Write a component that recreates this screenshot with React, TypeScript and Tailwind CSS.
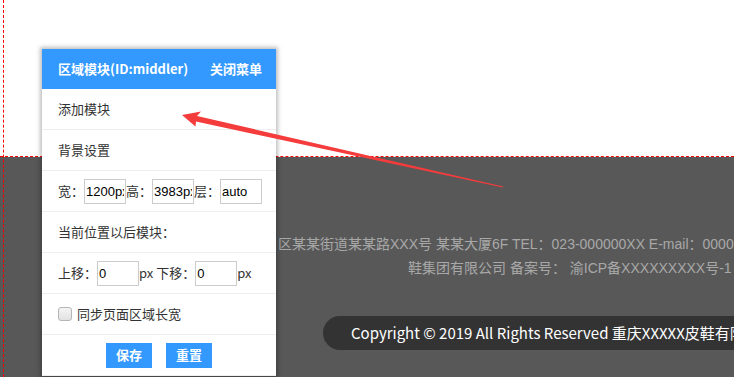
import React from "react";

const cjk = { fontFamily: '"Noto Sans CJK SC", "Noto Sans", sans-serif' };
const mixed = { fontFamily: '"Liberation Sans", "Noto Sans CJK SC", sans-serif' };

function Row({ children, className = "" }: { children: React.ReactNode; className?: string }) {
  return (
    <div className={`h-[41px] border-b border-[#eeeeee] flex items-center pl-[16px] text-[13px] text-[#333] ${className}`}>
      {children}
    </div>
  );
}

function Box({ value, w = "w-[42px]" }: { value: string; w?: string }) {
  return (
    <input
      readOnly
      defaultValue={value}
      className={`${w} h-[25px] border border-[#cccccc] bg-white px-[1px] text-[13px] text-black outline-none`}
      style={mixed}
    />
  );
}

export default function App() {
  return (
    <div className="relative w-[734px] h-[377px] overflow-hidden bg-white" style={cjk}>
      <div className="h-[157px] border-b border-dashed border-[#ff0000] bg-white" />
      <div className="h-[220px] bg-[#585858] pt-[75px]">
        <div className="whitespace-nowrap text-[14px] leading-[24px] text-[#a8a8a8] pl-[278px]" style={mixed}>
          区某某街道某某路XXX号 某某大厦6F TEL：023-000000XX E-mail：0000XXXX@qq.com
        </div>
        <div className="whitespace-nowrap text-[14px] leading-[24px] text-[#a8a8a8] pl-[408px]" style={mixed}>
          鞋集团有限公司 备案号： 渝ICP备XXXXXXXXX号-1
        </div>
        <div className="mt-[36px] ml-[323px] h-[34px] rounded-l-full bg-[#333333] flex items-center pl-[28px] whitespace-nowrap text-[15px] text-white">
          Copyright © 2019 All Rights Reserved 重庆XXXXX皮鞋有限公司
        </div>
      </div>

      {/* vertical dashed guide */}
      <div className="absolute left-[3px] top-0 h-full border-l border-dashed border-[#ff0000]" />

      {/* context panel */}
      <div className="absolute left-[42px] top-[49px] w-[234px] bg-white shadow-[0_0_4px_2px_rgba(0,0,0,0.25)]">
        <div className="h-[40px] bg-[#3399ff] flex items-center justify-between pl-[16px] pr-[14px] text-[13px] font-bold text-white">
          <span>区域模块(ID:middler)</span>
          <span>关闭菜单</span>
        </div>
        <Row>添加模块</Row>
        <Row>背景设置</Row>
        <Row>
          <span>宽：</span>
          <Box value="1200px" />
          <span>高：</span>
          <Box value="3983px" />
          <span>层：</span>
          <Box value="auto" />
        </Row>
        <Row>当前位置以后模块：</Row>
        <Row>
          <span>上移：</span>
          <Box value="0" />
          <span>px 下移：</span>
          <Box value="0" />
          <span>px</span>
        </Row>
        <Row>
          <span className="w-[14px] h-[14px] rounded-[3px] border border-[#b5b5b5] bg-gradient-to-b from-[#f4f4f4] to-[#e2e2e2] mr-[5px]" />
          <span>同步页面区域长宽</span>
        </Row>
        <div className="h-[41px] border-b border-[#eeeeee] flex items-center justify-center gap-[14px]">
          <button className="w-[46px] h-[25px] bg-[#3399ff] text-white text-[13px] font-bold">保存</button>
          <button className="w-[46px] h-[25px] bg-[#3399ff] text-white text-[13px] font-bold">重置</button>
        </div>
      </div>

      {/* annotation arrow */}
      <svg className="absolute left-0 top-0" width="734" height="377" viewBox="0 0 734 377">
        <polygon
          points="182,115 201,111.5 197,116 503,186.6 502.8,187.6 196,121.5 195.5,126.5"
          fill="#f53c3c"
        />
      </svg>
    </div>
  );
}
